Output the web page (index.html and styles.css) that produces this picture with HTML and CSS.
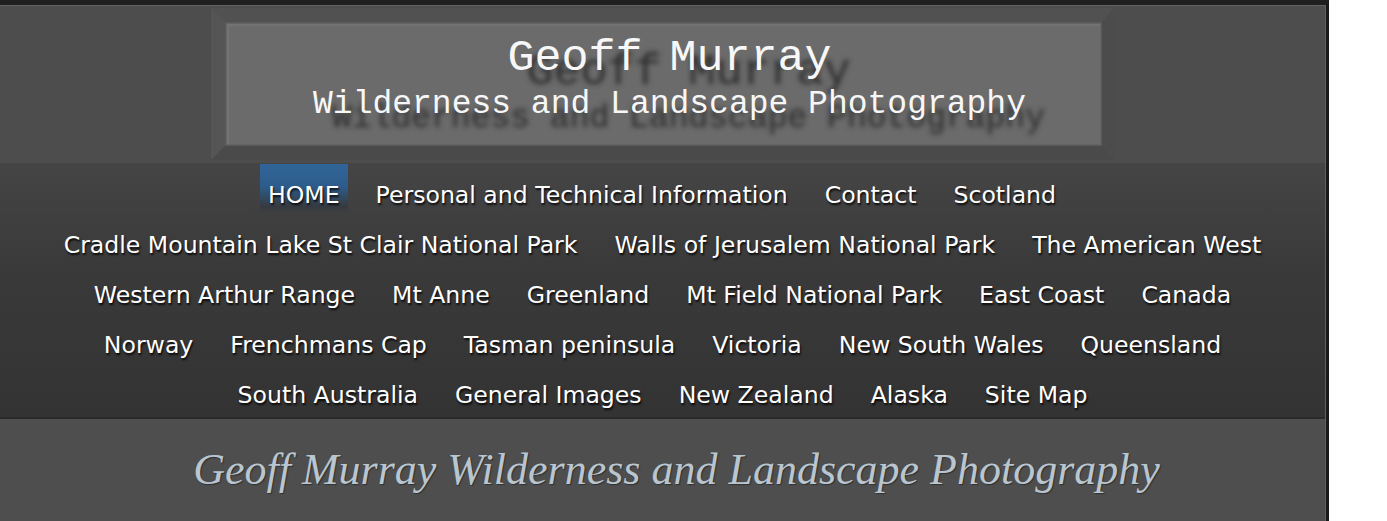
FILE: index.html
```html
<!DOCTYPE html>
<html lang="en">
<head>
<meta charset="utf-8">
<title>Geoff Murray Wilderness and Landscape Photography</title>
<link rel="stylesheet" href="styles.css">
</head>
<body>
<div class="page">
  <div class="site">
    <header class="header">
      <div class="banner">
        <div class="banner-inner">
          <div class="banner-title">Geoff Murray</div>
          <div class="banner-sub">Wilderness and Landscape Photography</div>
        </div>
      </div>
    </header>
    <nav class="nav">
      <ul class="menu">
        <li class="item active"><a href="#">HOME</a></li>
        <li class="item"><a href="#">Personal and Technical Information</a></li>
        <li class="item"><a href="#">Contact</a></li>
        <li class="item"><a href="#">Scotland</a></li>
        <li class="item"><a href="#">Cradle Mountain Lake St Clair National Park</a></li>
        <li class="item"><a href="#">Walls of Jerusalem National Park</a></li>
        <li class="item"><a href="#">The American West</a></li>
        <li class="item"><a href="#">Western Arthur Range</a></li>
        <li class="item"><a href="#">Mt Anne</a></li>
        <li class="item"><a href="#">Greenland</a></li>
        <li class="item"><a href="#">Mt Field National Park</a></li>
        <li class="item"><a href="#">East Coast</a></li>
        <li class="item"><a href="#">Canada</a></li>
        <li class="item"><a href="#">Norway</a></li>
        <li class="item"><a href="#">Frenchmans Cap</a></li>
        <li class="item"><a href="#">Tasman peninsula</a></li>
        <li class="item"><a href="#">Victoria</a></li>
        <li class="item"><a href="#">New South Wales</a></li>
        <li class="item"><a href="#">Queensland</a></li>
        <li class="item"><a href="#">South Australia</a></li>
        <li class="item"><a href="#">General Images</a></li>
        <li class="item"><a href="#">New Zealand</a></li>
        <li class="item"><a href="#">Alaska</a></li>
        <li class="item"><a href="#">Site Map</a></li>
      </ul>
    </nav>
    <main class="content">
      <h1 class="headline">Geoff Murray Wilderness and Landscape Photography</h1>
    </main>
  </div>
</div>
</body>
</html>
```
FILE: styles.css
```css
html, body {
  margin: 0;
  padding: 0;
  background: #ffffff;
}

.page {
  width: 1326px;
  border-top: 5px solid #1f1f1f;
  border-right: 3px solid #1a1a1a;
}

.site {
  width: 1325px;
  border-top: 1px solid #626262;
  border-right: 1px solid #5f5f5f;
  background: #4e4e4e;
}

/* ---------- header ---------- */
.header {
  height: 157px;
  padding-top: 2px;
  box-sizing: border-box;
  background: #4d4d4d;
}

.banner {
  width: 903px;
  height: 152px;
  margin: 0 auto;
  box-sizing: border-box;
  border-style: solid;
  border-width: 14px 12px 14px 14px;
  border-color: #515151 #4c4c4c #4a4a4a #555555;
  box-shadow: inset 0 0 0 2px #4a4a4a, inset 0 0 0 5px #555555, inset 0 0 0 7px #4c4c4c;
  padding: 0;
}

.banner-inner {
  height: 100%;
  box-sizing: border-box;
  background: #6b6b6b;
  border: 1px solid #5a5a5a;
  box-shadow: inset 0 0 0 1px #646464, inset 1px 1px 0 2px #737373;
  text-align: center;
  padding: 10px 0 0 12px;
  font-family: "Liberation Mono", "DejaVu Sans Mono", monospace;
  color: #f7f7f7;
  text-shadow: 19px 14px 5px rgba(34, 34, 34, 0.85);
}

.banner-title {
  font-size: 45px;
  line-height: 52px;
}

.banner-sub {
  font-size: 33px;
  line-height: 40px;
}

/* ---------- nav ---------- */
.nav {
  background: linear-gradient(#454545, #3a3a3a 40%, #333333);
  border-bottom: 2px solid #2a2a2a;
  padding: 1px 36px 3px;
}

.menu {
  list-style: none;
  margin: 0;
  padding: 0;
  display: flex;
  flex-wrap: wrap;
  justify-content: center;
  column-gap: 19px;
}

.item {
  height: 50px;
  box-sizing: border-box;
  padding: 12px 9px 0;
  line-height: 38px;
  font-family: "DejaVu Sans", Verdana, sans-serif;
  font-size: 23.6px;
  white-space: nowrap;
}

.item a {
  color: #ffffff;
  text-decoration: none;
  text-shadow: 1px 2px 2px rgba(0, 0, 0, 0.85);
}

.item.active {
  padding: 12px 8px 0;
  background: linear-gradient(#306599, #2d5c8b 45%, #363a40 85%, rgba(54, 54, 54, 0) 100%);
}

/* ---------- content ---------- */
.content {
  min-height: 77px;
  background: #4e4e4e;
  padding: 25px 0 0 28px;
}

.headline {
  margin: 0;
  text-align: center;
  font-family: "Liberation Serif", "Times New Roman", serif;
  font-style: italic;
  font-weight: normal;
  font-size: 44px;
  line-height: normal;
  color: #b9c5cf;
  text-shadow: 1px 1px 1px rgba(30, 30, 30, 0.6);
}
```
